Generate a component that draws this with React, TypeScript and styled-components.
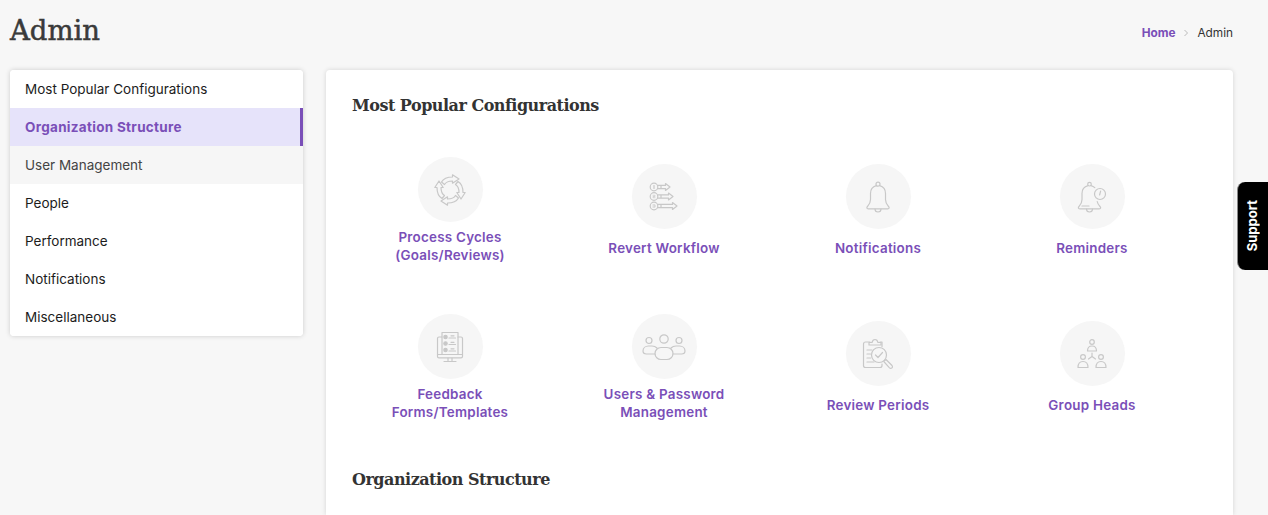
import React from "react";
import styled, { createGlobalStyle } from "styled-components";

const GlobalStyle = createGlobalStyle`
  html, body {
    margin: 0;
    height: 515px;
    overflow: hidden;
    background: #f7f7f7;
    font-family: "Inter", "Liberation Sans", sans-serif;
  }
  * { box-sizing: border-box; }
`;

const Page = styled.div`
  padding: 0 35px 0 10px;
`;

const Header = styled.header`
  height: 70px;
  display: flex;
  align-items: center;
  justify-content: space-between;
  padding-bottom: 10px;
`;

const Title = styled.h1`
  margin: 0;
  font-family: "DejaVu Serif", serif;
  font-size: 27.5px;
  font-weight: 400;
  color: #3a3a3a;
  letter-spacing: 0;
  -webkit-text-stroke: 0.5px #3a3a3a;
`;

const Crumbs = styled.nav`
  display: flex;
  align-items: center;
  gap: 8px;
  font-size: 11.8px;
  color: #333;
  padding-top: 6px;
`;

const CrumbLink = styled.a`
  color: #7a4fb8;
  font-weight: 700;
`;

const Layout = styled.div`
  display: grid;
  grid-template-columns: 293px 1fr;
  gap: 23px;
  align-items: start;
`;

const Sidebar = styled.ul`
  margin: 0;
  padding: 0;
  list-style: none;
  background: #fff;
  border-radius: 4px;
  overflow: hidden;
  box-shadow: 0 0 5px rgba(0, 0, 0, 0.18);
`;

const SideItem = styled.li<{ $state?: "active" | "hover" }>`
  height: 38px;
  padding: 0 15px;
  display: flex;
  align-items: center;
  font-size: 13.5px;
  letter-spacing: ${(p) => (p.$state === "active" ? "0.3px" : "0")};
  color: ${(p) => (p.$state === "active" ? "#7a4fb8" : p.$state === "hover" ? "#444" : "#1c1c1c")};
  font-weight: ${(p) => (p.$state === "active" ? 700 : 400)};
  background: ${(p) => (p.$state === "active" ? "#e6e3fa" : p.$state === "hover" ? "#f6f6f6" : "#fff")};
  border-right: ${(p) => (p.$state === "active" ? "3px solid #7a4fb8" : "none")};
`;

const Card = styled.main`
  background: #fff;
  border-radius: 4px 4px 0 0;
  padding: 25px 26px 0;
  height: 445px;
  box-shadow: 0 0 5px rgba(0, 0, 0, 0.14);
`;

const SectionTitle = styled.h2`
  margin: 0;
  height: 22px;
  line-height: 22px;
  font-family: "DejaVu Serif", serif;
  font-size: 16px;
  font-weight: 700;
  color: #333;
  letter-spacing: -0.5px;
`;

const TileGrid = styled.div`
  display: grid;
  grid-template-columns: repeat(4, 214px);
  grid-auto-rows: 157px;
  margin: 15px 0 23px -9px;
`;

const Tile = styled.a`
  display: flex;
  flex-direction: column;
  align-items: center;
  justify-content: center;
`;

const IconCircle = styled.span`
  width: 65px;
  height: 65px;
  border-radius: 50%;
  background: #f6f6f6;
  display: flex;
  align-items: center;
  justify-content: center;
`;

const TileLabel = styled.span<{ $lines: number }>`
  margin-top: ${(p) => (p.$lines > 1 ? 6 : 10)}px;
  font-size: 13.4px;
  line-height: 18px;
  letter-spacing: 0.25px;
  font-weight: 600;
  color: #7a4fb8;
  text-align: center;
  white-space: pre-line;
`;

const SupportTab = styled.div`
  position: absolute;
  top: 182px;
  right: 0;
  width: 31px;
  height: 88px;
  background: #000;
  border-left: 1.5px solid #888;
  border-radius: 8px 0 0 8px;
  display: flex;
  align-items: center;
  justify-content: center;
  color: #fff;
  font-size: 13px;
  font-weight: 700;
  writing-mode: vertical-rl;
  padding-right: 2px;
`;

const SupportText = styled.span`
  transform: rotate(180deg);
`;

const Icon = styled.svg.attrs({ fill: "none", stroke: "#c8c8c8", strokeLinecap: "round", strokeLinejoin: "round" })`
  stroke-width: 1.2;
`;

const CycleIcon = () => (
  <Icon width="32" height="32" viewBox="0 0 32 32">
    {[0, 90, 180, 270].map((deg) => (
      <path key={deg} transform={`rotate(${deg} 16 16)`} d="M7.5 8C9.5 4.5 13 3 18.5 3V0.8L25 5 18.5 9.2V7C14 7 12 8 10.5 10.5Z" />
    ))}
  </Icon>
);

const RevertIcon = () => (
  <Icon width="32" height="32" viewBox="0 0 32 32">
    {[
      [6, 22],
      [15.5, 25],
      [25, 29],
    ].map(([y, end], i) => (
      <g key={y}>
        <circle cx="6" cy={y} r="3.8" />
        {i === 0 && <path d={`M6 ${y - 1.5}V${y + 1.5}`} />}
        {i === 1 && <path d={`M5 ${y - 1.2}H7V${y}H5V${y + 1.2}H7`} strokeWidth="0.7" />}
        {i === 2 && <path d={`M5 ${y - 1.2}H7V${y + 1.2}H5M5 ${y}H7`} strokeWidth="0.7" />}
        <path d={`M9.8 ${y - 1.6}H${end - 4.5}V${y - 3.4}L${end} ${y}L${end - 4.5} ${y + 3.4}V${y + 1.6}H9.8M13 ${y - 1.6}V${y + 1.6}`} />
      </g>
    ))}
  </Icon>
);

const BellIcon = () => (
  <Icon width="32" height="32" viewBox="0 0 32 32">
    <circle cx="16" cy="3.2" r="2" />
    <path d="M14.3 4.6C10.5 5.6 8.5 8.5 8.5 12.5V18.5C8.5 21.5 7.5 23.5 5.5 25.5C4.4 26.6 4.8 27.8 6.2 27.8H25.8C27.2 27.8 27.6 26.6 26.5 25.5C24.5 23.5 23.5 21.5 23.5 18.5V12.5C23.5 8.5 21.5 5.6 17.7 4.6" />
    <path d="M13 28C13 30 14.2 31 16 31S19 30 19 28" />
  </Icon>
);

const ReminderIcon = () => (
  <Icon width="34" height="32" viewBox="0 0 34 32">
    <circle cx="14.5" cy="3.2" r="1.8" />
    <path d="M13 4.6C9 5.6 7 8.5 7 12.5V18.5C7 21.5 6 23.5 4 25.5C2.9 26.6 3.3 27.8 4.7 27.8H24.3C25.7 27.8 26.1 26.6 25 25.5C23.6 24 22.6 22.5 22.2 20.5M16 4.6C17.5 5 18.8 5.7 19.8 6.7" />
    <path d="M11.5 28C11.5 30 12.7 31 14.5 31S17.5 30 17.5 28M7 25H14" />
    <circle cx="25" cy="13" r="5.5" />
    <path d="M25.6 10.2L24.6 14" />
  </Icon>
);

const FormsIcon = () => (
  <Icon width="28" height="32" viewBox="0 0 28 32">
    <path d="M6 6H3C2 6 1.5 6.5 1.5 7.5V23.5H26.5V7.5C26.5 6.5 26 6 25 6H22M1.5 23.5V25.5C1.5 26.3 2 26.8 3 26.8H25C26 26.8 26.5 26.3 26.5 25.5V23.5" />
    <path d="M6 23V1.5H22V23" />
    <path d="M12 27V29.5M16 27V29.5M8 30.5H20" />
    {[6, 12.5, 19].map((y) => (
      <g key={y}>
        <circle cx="9.5" cy={y} r="1.7" fill="#c8c8c8" />
        <path d={`M13 ${y + 1}H19.5M15 ${y - 1.2}H18`} />
      </g>
    ))}
  </Icon>
);

const UsersIcon = () => (
  <Icon width="44" height="28" viewBox="0 0 44 28">
    <circle cx="22" cy="6" r="4.2" />
    <rect x="13" y="14.5" width="18" height="12" rx="6" />
    <circle cx="7" cy="7.5" r="3" />
    <circle cx="37" cy="7.5" r="3" />
    <path d="M13 21H4.5C2.5 21 1 19.7 1 18C1 15 3.5 13 6.5 13H10C12 13 13.5 13.5 15 15" />
    <path d="M31 21H39.5C41.5 21 43 19.7 43 18C43 15 40.5 13 37.5 13H34C32 13 30.5 13.5 29 15" />
  </Icon>
);

const ReviewIcon = () => (
  <Icon width="32" height="32" viewBox="0 0 32 32">
    <path d="M8 4H3.5C2.3 4 1.5 4.8 1.5 6V27.5C1.5 28.7 2.3 29.5 3.5 29.5H18C19.2 29.5 20 28.7 20 27.5V26M18 4H20V8.5" />
    <path d="M7 7V4.5H10C10.5 2.5 11.5 1.5 13 1.5S15.5 2.5 16 4.5H19V7Z" />
    <path d="M5 12H10M5 16H8.5M5 20H8.5M5 24H12" />
    <circle cx="17" cy="17" r="7.5" />
    <path d="M13.5 17L16 19.5L20.5 14.5" />
    <path d="M22.5 22.5L24 21.5L30 27.5C30.8 28.5 30.5 29.5 29.8 30C29 30.5 28.2 30.5 27.5 29.8L21.8 23.5" />
  </Icon>
);

const GroupIcon = () => (
  <Icon width="30" height="30" viewBox="0 0 30 30">
    <circle cx="15" cy="3" r="2.3" />
    <path d="M10.5 12C10.5 8.5 12 7 15 7S19.5 8.5 19.5 12Z" />
    <circle cx="6" cy="18" r="2.4" />
    <path d="M1 28.5C1 24.5 2.8 22.5 6 22.5S11 24.5 11 28.5Z" />
    <circle cx="24" cy="18" r="2.4" />
    <path d="M19 28.5C19 24.5 20.8 22.5 24 22.5S29 24.5 29 28.5Z" />
    <path d="M15 14V17.5L11.5 20M15 17.5L18.5 20" />
  </Icon>
);

const tiles = [
  { label: "Process Cycles\n(Goals/Reviews)", lines: 2, icon: <CycleIcon /> },
  { label: "Revert Workflow", lines: 1, icon: <RevertIcon /> },
  { label: "Notifications", lines: 1, icon: <BellIcon /> },
  { label: "Reminders", lines: 1, icon: <ReminderIcon /> },
  { label: "Feedback\nForms/Templates", lines: 2, icon: <FormsIcon /> },
  { label: "Users & Password\nManagement", lines: 2, icon: <UsersIcon /> },
  { label: "Review Periods", lines: 1, icon: <ReviewIcon /> },
  { label: "Group Heads", lines: 1, icon: <GroupIcon /> },
];

const menu: { label: string; state?: "active" | "hover" }[] = [
  { label: "Most Popular Configurations" },
  { label: "Organization Structure", state: "active" },
  { label: "User Management", state: "hover" },
  { label: "People" },
  { label: "Performance" },
  { label: "Notifications" },
  { label: "Miscellaneous" },
];

export default function App() {
  return (
    <Page>
      <GlobalStyle />
      <Header>
        <Title>Admin</Title>
        <Crumbs>
          <CrumbLink>Home</CrumbLink>
          <svg width="6" height="8" viewBox="0 0 6 8" fill="none" stroke="#bbb" strokeWidth="1">
            <path d="M1.5 1L4.5 4L1.5 7" />
          </svg>
          <span>Admin</span>
        </Crumbs>
      </Header>
      <Layout>
        <Sidebar>
          {menu.map((m) => (
            <SideItem key={m.label} $state={m.state}>
              {m.label}
            </SideItem>
          ))}
        </Sidebar>
        <Card>
          <SectionTitle>Most Popular Configurations</SectionTitle>
          <TileGrid>
            {tiles.map((t) => (
              <Tile key={t.label}>
                <IconCircle>{t.icon}</IconCircle>
                <TileLabel $lines={t.lines}>{t.label}</TileLabel>
              </Tile>
            ))}
          </TileGrid>
          <SectionTitle>Organization Structure</SectionTitle>
        </Card>
      </Layout>
      <SupportTab>
        <SupportText>Support</SupportText>
      </SupportTab>
    </Page>
  );
}
